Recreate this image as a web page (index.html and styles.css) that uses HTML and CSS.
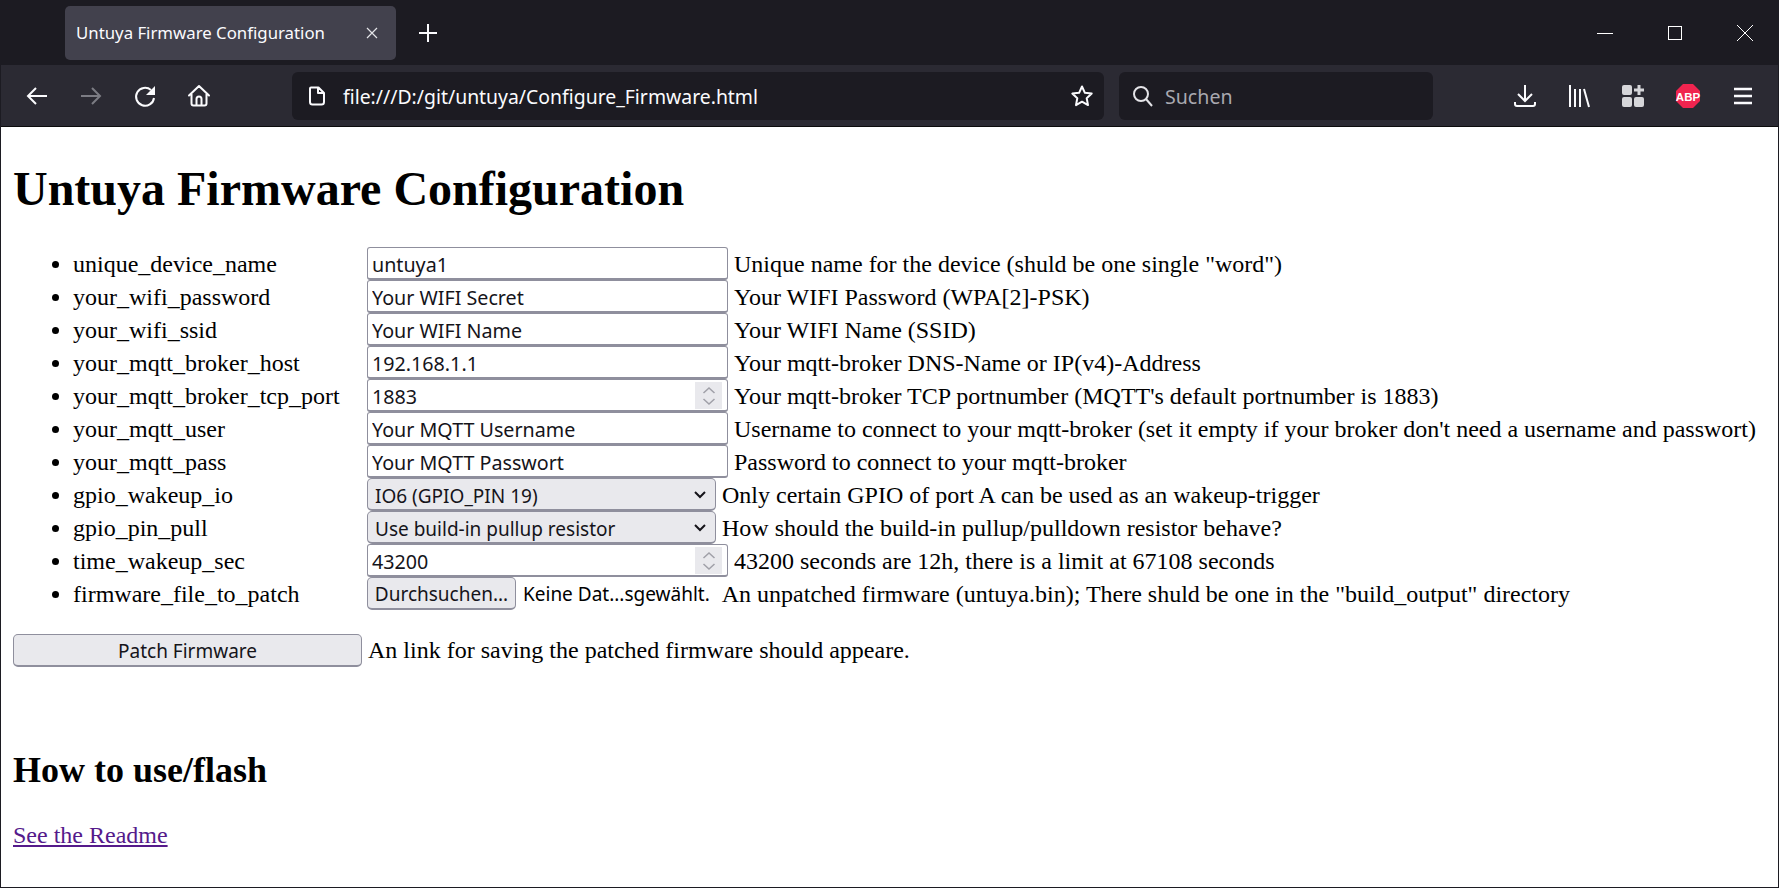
FILE: index.html
```html
<!DOCTYPE html>
<html lang="en">
<head>
    <meta charset="UTF-8">
    <title>Untuya Firmware Configuration</title>
    <link rel="stylesheet" href="styles.css">
</head>
<body>
    <div class="browser">
        <div class="tabbar">
            <div class="tab">
                <span class="tab-title">Untuya Firmware Configuration</span>
                <svg class="tab-close" width="12" height="12" viewBox="0 0 12 12"><path d="M1 1l10 10M11 1L1 11" stroke="#e4e4e8" stroke-width="1.2" fill="none"/></svg>
            </div>
            <svg class="new-tab" width="18" height="18" viewBox="0 0 18 18"><path d="M9 0v18M0 9h18" stroke="#fbfbfe" stroke-width="2" fill="none"/></svg>
            <div class="window-buttons">
                <svg width="16" height="16" viewBox="0 0 16 16"><path d="M0 8.500h16" stroke="#fff" stroke-width="1" fill="none"/></svg>
                <svg width="16" height="16" viewBox="0 0 16 16"><rect x="1.500" y="1.500" width="13" height="13" stroke="#fff" stroke-width="1" fill="none"/></svg>
                <svg width="16" height="16" viewBox="0 0 16 16"><path d="M0 0l16 16M16 0L0 16" stroke="#fff" stroke-width="1" fill="none"/></svg>
            </div>
        </div>
        <div class="toolbar">
            <div class="nav-icons">
                <svg width="24" height="24" viewBox="0 0 24 24"><path d="M22 12H3M11 4l-8 8 8 8" stroke="#fbfbfe" stroke-width="2" fill="none"/></svg>
                <svg width="24" height="24" viewBox="0 0 24 24"><path d="M2 12h19M13 4l8 8-8 8" stroke="#7c7c84" stroke-width="2" fill="none"/></svg>
                <svg width="24" height="24" viewBox="0 0 24 24"><path d="M21 14a9 9 0 1 1-3-8" stroke="#fbfbfe" stroke-width="2" fill="none"/><path d="M22 2v9h-9z" fill="#fbfbfe"/></svg>
                <svg width="24" height="24" viewBox="0 0 24 24"><path d="M2 11.500L12 2l10 9.500M4.500 10v9.500a2 2 0 0 0 2 2h11a2 2 0 0 0 2-2V10M9.500 21.500V15a2.500 2.500 0 0 1 5 0v6.500" stroke="#fbfbfe" stroke-width="2" stroke-linecap="round" stroke-linejoin="round" fill="none"/></svg>
            </div>
            <div class="urlbar">
                <svg width="20" height="20" viewBox="0 0 20 20"><path d="M4 1.500h7.500L17 7v9a2.500 2.500 0 0 1-2.500 2.500h-9A2.500 2.500 0 0 1 3 16V2.500a1 1 0 0 1 1-1zM11 1.500V7h6" stroke="#fbfbfe" stroke-width="2" stroke-linejoin="round" fill="none"/></svg>
                <span class="url">file:///D:/git/untuya/Configure_Firmware.html</span>
                <svg class="star" width="24" height="24" viewBox="0 0 24 24"><path d="M12 2.500l2.900 6.300 6.800.800-5 4.700 1.300 6.800-6-3.400-6 3.400 1.300-6.800-5-4.700 6.800-.800z" stroke="#fbfbfe" stroke-width="2" stroke-linejoin="round" fill="none"/></svg>
            </div>
            <div class="searchbar">
                <svg width="22" height="22" viewBox="0 0 22 22"><circle cx="9" cy="9" r="7" stroke="#e4e4e8" stroke-width="2" fill="none"/><path d="M14 14l6 7" stroke="#e4e4e8" stroke-width="2" fill="none"/></svg>
                <span class="search-text">Suchen</span>
            </div>
            <div class="tool-icons">
                <svg width="24" height="24" viewBox="0 0 24 24"><path d="M12 1v16M5 10l7 7 7-7M2 18v2a2 2 0 0 0 2 2h16a2 2 0 0 0 2-2v-2" stroke="#fbfbfe" stroke-width="2" fill="none"/></svg>
                <svg width="24" height="24" viewBox="0 0 24 24"><path d="M3 1v22M8 5v18M13 5v18M17 5l5 18" stroke="#fbfbfe" stroke-width="2" fill="none"/></svg>
                <svg width="24" height="24" viewBox="0 0 24 24"><g fill="#d6d6da"><rect x="1" y="1" width="10" height="10" rx="2"/><rect x="1" y="13" width="10" height="10" rx="2"/><rect x="13" y="13" width="10" height="10" rx="2"/><path d="M16.500 1h3v3.500H23v3h-3.500V11h-3V7.500H13v-3h3.500z"/></g></svg>
                <svg width="26" height="26" viewBox="0 0 26 26"><path d="M8 1h10l7 7v10l-7 7H8l-7-7V8z" fill="#f0244f"/><text class="abp" x="13" y="17.500" text-anchor="middle">ABP</text></svg>
                <svg width="24" height="24" viewBox="0 0 24 24"><path d="M3 5h18M3 12h18M3 19h18" stroke="#fbfbfe" stroke-width="2.500" fill="none"/></svg>
            </div>
        </div>
    </div>

    <main class="page">
        <h1>Untuya Firmware Configuration</h1>
        <ul class="config-list">
            <li><label>unique_device_name</label><input class="text-field" type="text" value="untuya1"><span>Unique name for the device (shuld be one single "word")</span></li>
            <li><label>your_wifi_password</label><input class="text-field" type="text" value="Your WIFI Secret"><span>Your WIFI Password (WPA[2]-PSK)</span></li>
            <li><label>your_wifi_ssid</label><input class="text-field" type="text" value="Your WIFI Name"><span>Your WIFI Name (SSID)</span></li>
            <li><label>your_mqtt_broker_host</label><input class="text-field" type="text" value="192.168.1.1"><span>Your mqtt-broker DNS-Name or IP(v4)-Address</span></li>
            <li><label>your_mqtt_broker_tcp_port</label><div class="number-field"><input class="text-field" type="text" value="1883"><div class="spinner"><svg width="14" height="22" viewBox="0 0 14 22"><path d="M1.500 8l5.500-5 5.500 5M1.500 14l5.500 5 5.500-5" stroke="#a0a0a8" stroke-width="1.500" fill="none"/></svg></div></div><span>Your mqtt-broker TCP portnumber (MQTT's default portnumber is 1883)</span></li>
            <li><label>your_mqtt_user</label><input class="text-field" type="text" value="Your MQTT Username"><span>Username to connect to your mqtt-broker (set it empty if your broker don't need a username and passwort)</span></li>
            <li><label>your_mqtt_pass</label><input class="text-field" type="text" value="Your MQTT Passwort"><span>Password to connect to your mqtt-broker</span></li>
            <li><label>gpio_wakeup_io</label><div class="select-field"><select><option>IO6 (GPIO_PIN 19)</option></select><svg width="12" height="8" viewBox="0 0 12 8"><path d="M1 1l5 5 5-5" stroke="#15141a" stroke-width="2" fill="none"/></svg></div><span>Only certain GPIO of port A can be used as an wakeup-trigger</span></li>
            <li><label>gpio_pin_pull</label><div class="select-field"><select><option>Use build-in pullup resistor</option></select><svg width="12" height="8" viewBox="0 0 12 8"><path d="M1 1l5 5 5-5" stroke="#15141a" stroke-width="2" fill="none"/></svg></div><span>How should the build-in pullup/pulldown resistor behave?</span></li>
            <li><label>time_wakeup_sec</label><div class="number-field"><input class="text-field" type="text" value="43200"><div class="spinner"><svg width="14" height="22" viewBox="0 0 14 22"><path d="M1.500 8l5.500-5 5.500 5M1.500 14l5.500 5 5.500-5" stroke="#a0a0a8" stroke-width="1.500" fill="none"/></svg></div></div><span>43200 seconds are 12h, there is a limit at 67108 seconds</span></li>
            <li><label>firmware_file_to_patch</label><button class="browse" type="button">Durchsuchen...</button><span class="no-file">Keine Dat...sgewählt.</span><span>An unpatched firmware (untuya.bin); There shuld be one in the "build_output" directory</span></li>
        </ul>
        <div class="patch-row">
            <button class="patch" type="button">Patch Firmware</button>
            <span>An link for saving the patched firmware should appeare.</span>
        </div>
        <h2>How to use/flash</h2>
        <p><a href="#">See the Readme</a></p>
    </main>
</body>
</html>
```

FILE: styles.css
```css
html, body {
    margin: 0;
    height: 100%;
}
body {
    display: flex;
    flex-direction: column;
    height: 888px;
    overflow: hidden;
    font-family: 'Liberation Serif', serif;
    box-sizing: border-box;
    border: 1px solid #1c1b22;
    border-top: none;
}
.browser {
    margin: 0 -1px;
    font-family: 'Noto Sans', sans-serif;
    border-bottom: 1px solid #0c0c0d;
}
svg {
    display: block;
    flex: none;
}

/* tabs */
.tabbar {
    height: 65px;
    background: #1c1b22;
    display: flex;
    align-items: center;
}
.tab {
    margin-left: 65px;
    width: 331px;
    height: 54px;
    box-sizing: border-box;
    background: #42414d;
    border-radius: 5px;
    display: flex;
    align-items: center;
    padding: 0 18px 0 11px;
    color: #fbfbfe;
    font-size: 16.8px;
}
.tab-title {
    flex: 1;
}
.new-tab {
    margin-left: 23px;
}
.window-buttons {
    margin-left: auto;
    display: flex;
    align-items: center;
    gap: 54px;
    padding-right: 26px;
}

/* toolbar */
.toolbar {
    height: 61px;
    background: #2b2a33;
    display: flex;
    align-items: center;
}
.nav-icons {
    display: flex;
    align-items: center;
    gap: 30px;
    padding-left: 25px;
    width: 267px;
    box-sizing: border-box;
}
.urlbar, .searchbar {
    height: 48px;
    background: #1c1b22;
    border-radius: 6px;
    display: flex;
    align-items: center;
    box-sizing: border-box;
}
.urlbar {
    margin-left: 25px;
    width: 812px;
    padding: 0 10px 0 15px;
}
.url {
    margin-left: 16px;
    flex: 1;
    color: #fbfbfe;
    font-size: 19.4px;
    padding-top: 2px;
}
.searchbar {
    margin-left: 15px;
    width: 314px;
    padding-left: 13px;
}
.search-text {
    margin-left: 11px;
    color: #a9a9b0;
    font-size: 19.6px;
    padding-top: 2px;
}
.tool-icons {
    margin-left: auto;
    display: flex;
    align-items: center;
    gap: 30px;
    padding-right: 24px;
}
.abp {
    font-family: 'Liberation Sans', sans-serif;
    font-weight: bold;
    font-size: 11.5px;
    fill: #fff;
}

/* page */
.page {
    flex: 1;
    background: #fff;
    color: #000;
    padding: 0 12px;
    font-size: 24px;
}
h1 {
    font-size: 48px;
    line-height: 55px;
    margin: 34px 0 31px;
}
.config-list {
    margin: 0;
    padding: 0 0 0 60px;
}
.config-list li {
    height: 33px;
    line-height: 35px;
    white-space: nowrap;
}
.config-list li > * {
    vertical-align: top;
}
.config-list label {
    display: inline-block;
    width: 294px;
}
.config-list span {
    margin-left: 6px;
}
.text-field, .config-list select, .browse, .patch {
    font-family: 'Noto Sans', sans-serif;
    font-size: 19px;
    color: #15141a;
    box-sizing: border-box;
    height: 33px;
    margin: 0;
}
.text-field {
    font-size: 19.7px;
    width: 361px;
    padding: 3px 4px 0;
    border: 1px solid #8f8f9d;
    border-bottom-width: 2px;
    border-radius: 3px;
    background: #fff;
}
.number-field, .select-field {
    position: relative;
    display: inline-block;
    line-height: normal;
}
.spinner {
    position: absolute;
    top: 3px;
    right: 6px;
    width: 27px;
    height: 27px;
    background: #e9e9ed;
    display: flex;
    align-items: center;
    justify-content: center;
}
.config-list select {
    display: block;
    appearance: none;
    width: 349px;
    padding: 3px 7px 0;
    border: 1px solid #8f8f9d;
    border-bottom-width: 2px;
    border-radius: 5px;
    background: #e9e9ed;
}
.select-field svg {
    position: absolute;
    top: 13px;
    right: 10px;
}
.browse, .patch {
    border: 1px solid #8f8f9d;
    border-bottom-width: 2px;
    border-radius: 5px;
    background: #e9e9ed;
    padding: 2px 0 0;
}
.browse {
    width: 149px;
}
.config-list .no-file {
    font-family: 'Noto Sans', sans-serif;
    font-size: 19px;
    margin-left: 7px;
    margin-right: 6px;
}
.patch-row {
    display: flex;
    align-items: center;
    margin-top: 24px;
}
.patch {
    width: 349px;
}
.patch-row span {
    margin-left: 6px;
}
h2 {
    font-size: 36px;
    line-height: 41px;
    margin: 83px 0 0;
}
.page p {
    margin: 31px 0 0;
}
a {
    color: #551a8b;
}
```
